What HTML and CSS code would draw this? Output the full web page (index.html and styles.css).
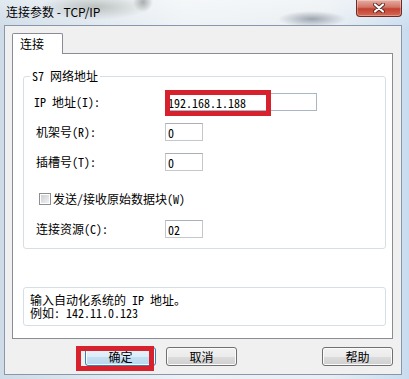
FILE: index.html
```html
<!DOCTYPE html>
<html lang="zh-CN">
<head>
    <meta charset="UTF-8">
    <meta name="viewport" content="width=device-width, initial-scale=1.0">
    <title>连接参数 - TCP/IP</title>
    <link rel="stylesheet" href="styles.css">
</head>
<body>

    <div class="window">
        <div class="titlebar">
            <span class="title">连接参数 - TCP/IP</span>
            <button class="close-btn" aria-label="关闭">
                <svg width="12" height="10" viewBox="0 0 12 10">
                    <path d="M2 1.5 L10 8.5 M10 1.5 L2 8.5" stroke="#5a2a26" stroke-width="4" stroke-linecap="round"/>
                    <path d="M2 1.5 L10 8.5 M10 1.5 L2 8.5" stroke="#ffffff" stroke-width="2.2" stroke-linecap="round"/>
                </svg>
            </button>
        </div>

        <div class="client">
            <div class="tabs">
                <div class="tab">连接</div>
            </div>

            <div class="panel">
                <fieldset class="group">
                    <legend>S7 网络地址</legend>

                    <div class="row">
                        <label class="lbl lbl-ip" for="ip">IP 地址(I):</label>
                        <input class="field field-wide" id="ip" type="text" value="192.168.1.188">
                    </div>
                    <div class="row">
                        <label class="lbl" for="rack">机架号(R):</label>
                        <input class="field" id="rack" type="text" value="0">
                    </div>
                    <div class="row">
                        <label class="lbl" for="slot">插槽号(T):</label>
                        <input class="field" id="slot" type="text" value="0">
                    </div>
                    <div class="row row-check">
                        <span class="checkbox"></span>
                        <span class="check-text">发送/接收原始数据块(W)</span>
                    </div>
                    <div class="row">
                        <label class="lbl" for="res">连接资源(C):</label>
                        <input class="field" id="res" type="text" value="02">
                    </div>
                </fieldset>

                <div class="hint">
                    <div>输入自动化系统的 IP 地址。</div>
                    <div>例如: 142.11.0.123</div>
                </div>
            </div>

            <div class="buttons">
                <button class="btn btn-default">确定</button>
                <button class="btn">取消</button>
                <button class="btn btn-help">帮助</button>
            </div>
        </div>

        <!-- red annotation boxes -->
        <div class="mark mark-ip"></div>
        <div class="mark mark-ok"></div>
    </div>

</body>
</html>
```

FILE: styles.css
```css
/* Reset */
* {
    margin: 0;
    padding: 0;
    box-sizing: border-box;
}

/* Aero glass frame */
body {
    width: 409px;
    height: 379px;
    overflow: hidden;
    font-family: "Noto Sans CJK SC", sans-serif;
    color: #000;
    background-color: #dde6ef;
    background-image:
        radial-gradient(ellipse 55px 13px at 95px 7px, rgba(150, 156, 148, 0.55), transparent),
        radial-gradient(ellipse 10px 10px at 143px 2px, rgba(120, 125, 125, 0.6), transparent),
        radial-gradient(ellipse 34px 8px at 312px 19px, rgba(105, 115, 130, 0.6), transparent),
        linear-gradient(180deg, rgba(255, 255, 255, 0.4), transparent 30px),
        linear-gradient(90deg, #cfdbe7, #eef2f5 45%, #e9eef2 80%, #c9dcef);
}

.window {
    position: relative;
    height: 379px;
    display: flex;
    flex-direction: column;
}

/* Title bar */
.titlebar {
    height: 25px;
    display: flex;
    justify-content: space-between;
    align-items: flex-start;
    padding: 0 7px 0 6px;
}

.title {
    font-size: 12px;
    line-height: 16px;
    padding-top: 4px;
}

.close-btn {
    width: 46px;
    height: 17px;
    border: 1px solid #6e2b25;
    border-top: none;
    border-radius: 0 0 4px 4px;
    background: linear-gradient(#e6ada3, #d27466 45%, #c2412f 55%, #d46a55);
    box-shadow: inset 0 0 0 1px rgba(255, 255, 255, 0.3);
    display: flex;
    align-items: center;
    justify-content: center;
}

/* Client area */
.client {
    flex: 1;
    margin: 0 7px 4px 4px;
    background-color: #f0f0f0;
    border: 1px solid #8798ad;
    padding: 7px 8px 8px 7px;
    display: flex;
    flex-direction: column;
}

.tabs {
    display: flex;
}

.tab {
    position: relative;
    z-index: 1;
    width: 51px;
    height: 21px;
    margin-bottom: -1px;
    background-color: #fff;
    border: 1px solid #898c95;
    border-bottom: none;
    border-radius: 2px 2px 0 0;
    font-size: 12px;
    line-height: 19px;
    padding-left: 7px;
}

.panel {
    height: 286px;
    background-color: #fff;
    border: 1px solid #898c95;
    padding: 14px 6px 0 10px;
    font-size: 12px;
    font-feature-settings: "hwid";
}

/* Group box */
.group {
    border: 1px solid #d5dfe5;
    border-radius: 3px;
    padding: 9px 0 10px 0;
    display: flex;
    flex-direction: column;
    gap: 12px;
}

.group legend {
    margin-left: 6px;
    padding: 0 2px;
    line-height: 16px;
}

.row {
    display: flex;
    align-items: center;
    height: 18px;
    padding-left: 12px;
}

.row-check {
    margin-top: 7px;
}

.lbl {
    width: 129px;
    line-height: 14px;
}

.lbl-ip {
    margin-left: -2px;
    width: 131px;
}

.field {
    width: 38px;
    height: 18px;
    border: 1px solid #c3c8cd;
    border-top-color: #abb0b6;
    padding: 0 2px;
    font-family: "Noto Sans CJK SC", sans-serif;
    font-size: 12px;
    font-feature-settings: "hwid";
    color: #000;
    outline: none;
}

.field-wide {
    width: 152px;
    border-color: #a9b7c4;
}

.checkbox {
    width: 12px;
    height: 12px;
    margin-left: 3px;
    margin-right: 2px;
    border: 1px solid #8e8f8f;
    background: linear-gradient(135deg, #c9cdd2, #f4f4f4);
    box-shadow: inset 0 0 0 1px #fff;
}

.check-text {
    line-height: 14px;
}

/* Hint box */
.hint {
    margin-top: 38px;
    height: 39px;
    border: 1px solid #d5dfe5;
    border-radius: 3px;
    padding: 5px 6px 0 6px;
    line-height: 13px;
}

/* Dialog buttons */
.buttons {
    display: flex;
    margin-top: 8px;
    padding-left: 73px;
    gap: 10px;
}

.btn {
    width: 71px;
    height: 19px;
    border: 1px solid #707070;
    border-radius: 3px;
    background: linear-gradient(#f2f2f2, #ebebeb 50%, #dddddd 50%, #cfcfcf);
    box-shadow: inset 0 0 0 1px #fbfbfb;
    font-family: "Noto Sans CJK SC", sans-serif;
    font-size: 12px;
    line-height: 16px;
    color: #000;
}

.btn-default {
    border-color: #3c7fb1;
    background: linear-gradient(#eaf4fc, #dcecf9 50%, #c6e0f4 50%, #b8d7ef);
}

.btn-help {
    margin-left: auto;
}

/* Annotation marks */
.mark {
    position: absolute;
    border: 5px solid #d7212d;
}

.mark-ip {
    left: 165px;
    top: 90px;
    width: 106px;
    height: 26px;
}

.mark-ok {
    left: 76px;
    top: 346px;
    width: 78px;
    height: 25px;
}
```
